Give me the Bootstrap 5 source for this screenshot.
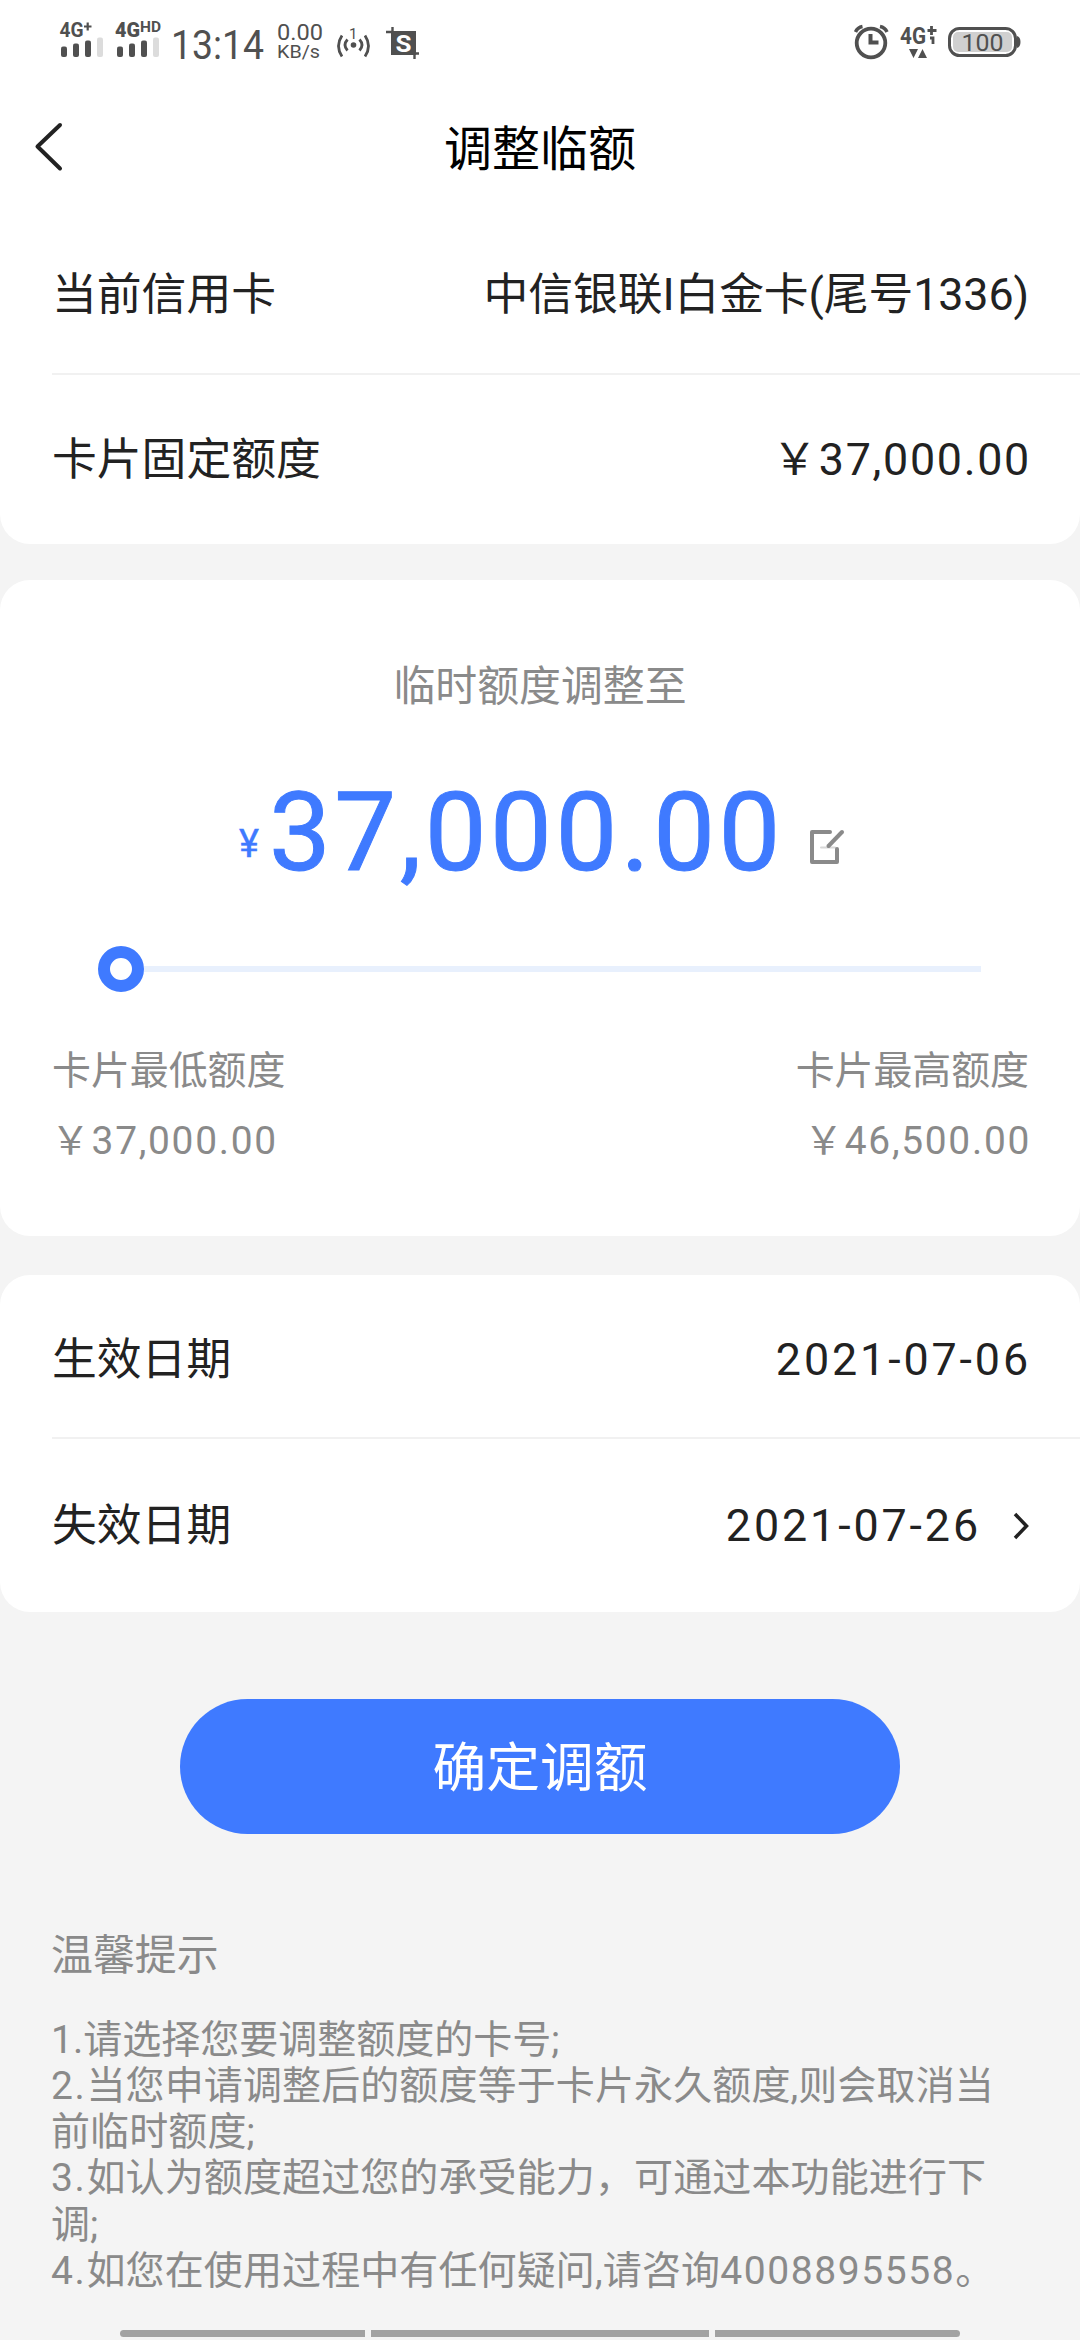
<!DOCTYPE html>
<html lang="zh-CN">
<head>
<meta charset="utf-8">
<meta name="viewport" content="width=device-width, initial-scale=1">
<title>调整临额</title>
<link href="https://cdn.jsdelivr.net/npm/bootstrap@5.3.0/dist/css/bootstrap.min.css" rel="stylesheet">
<style>
  body { background: #f4f4f4; color: #222; font-family: Roboto, "Noto Sans CJK SC", sans-serif; font-size: 44.8px; line-height: 1.2; height: 2340px; overflow: hidden; }
  .status-bar { height: 80px; }
  .title-bar { height: 140px; color: #000; font-size: 48px; }
  .panel { height: 324px; border-radius: 0 0 30px 30px; }
  .panel-round { border-radius: 30px; }
  .line-item { margin-left: 52px; padding-right: 51px; flex: 1 1 0; }
  .line-item:first-child { flex: 0 0 153px; padding-bottom: 3px; }
  .date-panel .line-item:first-child { flex-basis: 162px; padding: 7px 51px 0 0; }
  .line-item + .line-item { border-top: 2px solid #f1f1f1; }
  .card-name { letter-spacing: -.1px; }
  .num { letter-spacing: 1.7px; margin-right: -2px; }
  .date-num { letter-spacing: 2.9px; margin-right: -2px; }
  .muted { color: #8a8a8a; }
  .limit-panel { height: 656px; margin-top: 36px; }
  .limit-title { font-size: 41.9px; padding-top: 82px; line-height: 50px; }
  .amount { color: #3f7aff; height: 130px; margin-top: 56px; padding-left: 239px; line-height: 130px; font-size: 110px; }
  .amount-sign { font-size: 38px; line-height: 38px; width: 30px; margin-bottom: 35px; -webkit-text-stroke: .4px #3f7aff; }
  .amount-value { letter-spacing: 3.5px; width: 537px; -webkit-text-stroke: 1px #3f7aff; }
  .edit-icon { margin-bottom: 33px; }
  .slider { height: 46px; margin: 48px 99px 0 98px; }
  .slider-track { height: 6px; background: #e8f0fd; }
  .slider-knob { width: 46px; height: 46px; border: 12px solid #3f7aff; border-radius: 50%; background: #fff; }
  .limits { font-size: 38.9px; line-height: 69.500px; margin: 44px 51px 0 52px; }
  .limits .text-start .num { margin-left: -1px; }
  .date-panel { height: 337px; margin-top: 39px; }
  .arrow { margin-left: 26px; }
  .submit { width: 720px; height: 135px; margin-top: 87px; padding: 4px 0 0; background: #3f7aff; border: 0; font-size: 53.8px; line-height: 1; }
  .tips { margin: 97px 0 0 51px; font-size: 39px; line-height: 46.130px; }
  .tips-title { font-size: 41.9px; line-height: 50px; margin: 0 0 36px; font-weight: 400; }
  .tip-text { letter-spacing: .12px; }
  .tip-no { letter-spacing: 1.600px; }
  .phone { letter-spacing: 1.6px; }
  .nav-hints { gap: 6px; left: 120px; top: 2330px; width: 840px; }
  .nav-hints span { height: 7px; background: #a2a2a2; }
</style>
</head>
<body>
<header class="bg-white">
  <div class="status-bar">
    <svg class="d-block" width="1080" height="80" viewBox="0 0 1080 80" fill="#505050" font-family="Roboto, sans-serif">
      <g font-weight="700" font-size="20">
        <text x="59.500" y="37" textLength="24" lengthAdjust="spacingAndGlyphs">4G</text><path d="M84 26.500h7.500M87.700 22.500v8" stroke="#505050" stroke-width="2.200"/>
        <text x="115" y="37" font-weight="900" textLength="25" lengthAdjust="spacingAndGlyphs">4G</text><text x="140" y="32" font-size="14" textLength="21" lengthAdjust="spacingAndGlyphs">HD</text>
      </g>
      <g>
        <rect x="61" y="46.500" width="6" height="10.500" rx="2"/><rect x="73" y="43.500" width="6" height="13.500" rx="2"/><rect x="85" y="40.500" width="6" height="16.500" rx="2"/><rect x="97" y="37.500" width="6" height="19.500" rx="2" fill="#dcdcdc"/>
        <rect x="117" y="46.500" width="6" height="10.500" rx="2"/><rect x="129" y="43.500" width="6" height="13.500" rx="2"/><rect x="141" y="40.500" width="6" height="16.500" rx="2"/><rect x="153" y="37.500" width="6" height="19.500" rx="2" fill="#dcdcdc"/>
      </g>
      <text x="171" y="59" font-size="41" textLength="93" lengthAdjust="spacingAndGlyphs">13:14</text>
      <text x="277" y="39.500" font-size="22" textLength="46" lengthAdjust="spacingAndGlyphs">0.00</text>
      <text x="277" y="58" font-size="19" textLength="43" lengthAdjust="spacingAndGlyphs">KB/s</text>
      <text x="349" y="39" font-size="15">1</text>
      <circle cx="353.500" cy="45" r="2.800"/>
      <g fill="none" stroke="#505050" stroke-width="2.800">
        <path d="M347.500 39.500q-5 5.500 0 11M359.500 39.500q5 5.500 0 11M342 35.500q-7 10.500 0 21M365 35.500q7 10.500 0 21"/>
      </g>
      <path d="M391 31h25v24h-25z"/><path d="M386 32h7M392.500 27v28M413 53.500h6M414.500 53v6" stroke="#505050" stroke-width="2.400"/>
      <text x="395.500" y="51.500" font-size="23" font-weight="700" fill="#fff" textLength="16" lengthAdjust="spacingAndGlyphs">S</text>
      <g fill="none" stroke="#505050">
        <circle cx="871" cy="43" r="14.300" stroke-width="3.800"/><path d="M870.500 34v8.500h8" stroke-width="4"/><path d="M855.500 32q2-4.500 7-5.500M880 26.500q5 1 7 5.500" stroke-width="3.500"/>
      </g>
      <text x="900" y="43.500" font-size="24" font-weight="700" textLength="26" lengthAdjust="spacingAndGlyphs">4G</text>
      <path d="M931.500 26v9M927.500 30.500h9M930 38h3v6" fill="none" stroke="#505050" stroke-width="2.800"/>
      <path d="M909 49h9l-4.500 9zM918 58l4.500-9 4.500 9z"/>
      <rect x="949.500" y="28.500" width="66" height="27" rx="10" fill="#fff" stroke="#505050" stroke-width="3"/>
      <rect x="953" y="32" width="59" height="20" rx="5" fill="#d0d0d0"/><path d="M1017 36q3.500 1 3.500 6t-3.500 6z"/>
      <text x="961.500" y="51" font-size="24.500" textLength="42" lengthAdjust="spacingAndGlyphs">100</text>
    </svg>
  </div>
  <div class="title-bar d-flex align-items-center justify-content-center position-relative">
    <svg class="position-absolute top-0 start-0" width="80" height="140" fill="none" stroke="#222" stroke-width="4" stroke-linecap="round" stroke-linejoin="round"><path d="M60 45L37.500 66.500 60 88.500"/></svg>
    <span>调整临额</span>
  </div>
</header>
<main>
  <section class="panel bg-white d-flex flex-column">
    <div class="line-item d-flex justify-content-between align-items-center"><span>当前信用卡</span><span class="card-name">中信银联I白金卡(尾号1336)</span></div>
    <div class="line-item d-flex justify-content-between align-items-center"><span>卡片固定额度</span><span class="num">￥37,000.00</span></div>
  </section>
  <section class="panel-round limit-panel bg-white overflow-hidden">
    <div class="limit-title muted text-center">临时额度调整至</div>
    <div class="amount d-flex align-items-end">
      <span class="amount-sign">¥</span><span class="amount-value">37,000.00</span>
      <svg class="edit-icon" width="44" height="40" viewBox="0 0 44 40" fill="none" stroke="#8a8a8a" stroke-width="4" stroke-linecap="round" stroke-linejoin="round"><path d="M15 22.500h14" stroke="#d8d8d8" stroke-width="2"/><path d="M24 7H6v30h25V24"/><path d="M36 7L22.500 21"/></svg>
    </div>
    <div class="slider d-flex align-items-center"><span class="slider-knob"></span><span class="slider-track flex-grow-1"></span></div>
    <div class="limits muted d-flex justify-content-between">
      <div class="text-start">卡片最低额度<br><span class="num">￥37,000.00</span></div>
      <div class="text-end">卡片最高额度<br><span class="num">￥46,500.00</span></div>
    </div>
  </section>
  <section class="panel-round date-panel bg-white d-flex flex-column">
    <div class="line-item d-flex justify-content-between align-items-center"><span>生效日期</span><span class="date-num">2021-07-06</span></div>
    <div class="line-item d-flex align-items-center"><span class="me-auto">失效日期</span><span class="date-num">2021-07-26</span>
      <svg class="arrow" width="24" height="30" viewBox="0 0 24 30" fill="none" stroke="#222" stroke-width="3.500"><path d="M10 3l11.500 12L10 27"/></svg></div>
  </section>
  <button type="button" class="submit btn btn-primary rounded-pill d-block mx-auto">确定调额</button>
  <section class="tips muted text-nowrap">
    <h2 class="tips-title">温馨提示</h2>
    <div>1.请选择您要调整额度的卡号;</div>
    <div class="tip-text"><span class="tip-no">2.</span>当您申请调整后的额度等于卡片永久额度,则会取消当<br>前临时额度;</div>
    <div class="tip-text"><span class="tip-no">3.</span>如认为额度超过您的承受能力，可通过本功能进行下<br>调;</div>
    <div class="tip-text"><span class="tip-no">4.</span>如您在使用过程中有任何疑问,请咨询<span class="phone">4008895558</span>。</div>
  </section>
</main>
<div class="nav-hints position-absolute d-flex">
  <span class="rounded-start-pill col"></span><span class="col-auto" style="width:338px"></span><span class="rounded-end-pill col"></span>
</div>
<script src="https://cdn.jsdelivr.net/npm/bootstrap@5.3.0/dist/js/bootstrap.bundle.min.js"></script>
</body>
</html>
